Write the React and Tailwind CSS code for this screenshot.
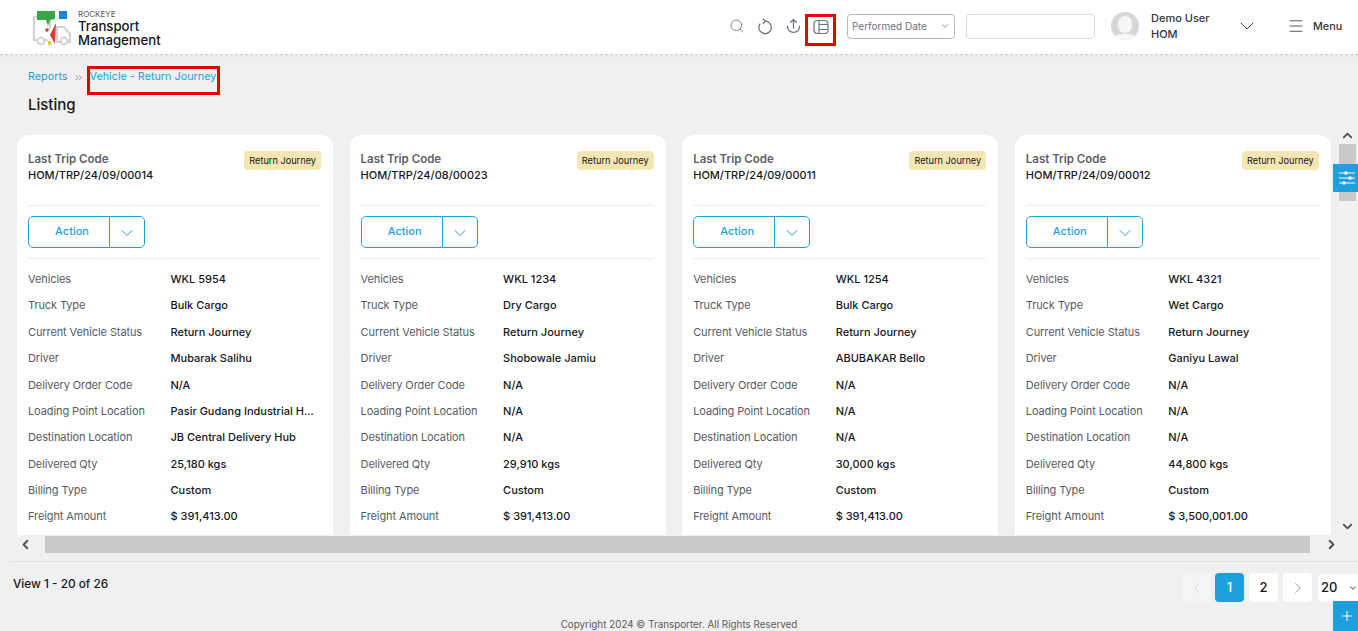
import React from 'react';
import { ChevronDown, ChevronLeft, ChevronRight, ChevronUp, ChevronsRight, Menu, Plus, Search } from 'lucide-react';

const cards = [
    { code: 'HOM/TRP/24/09/00014', vehicle: 'WKL 5954', truck: 'Bulk Cargo', driver: 'Mubarak Salihu', loading: 'Pasir Gudang Industrial H...', dest: 'JB Central Delivery Hub', qty: '25,180 kgs', amount: '$ 391,413.00' },
    { code: 'HOM/TRP/24/08/00023', vehicle: 'WKL 1234', truck: 'Dry Cargo', driver: 'Shobowale Jamiu', loading: 'N/A', dest: 'N/A', qty: '29,910 kgs', amount: '$ 391,413.00' },
    { code: 'HOM/TRP/24/09/00011', vehicle: 'WKL 1254', truck: 'Bulk Cargo', driver: 'ABUBAKAR Bello', loading: 'N/A', dest: 'N/A', qty: '30,000 kgs', amount: '$ 391,413.00' },
    { code: 'HOM/TRP/24/09/00012', vehicle: 'WKL 4321', truck: 'Wet Cargo', driver: 'Ganiyu Lawal', loading: 'N/A', dest: 'N/A', qty: '44,800 kgs', amount: '$ 3,500,001.00' },
];

const Logo = () => (
    <svg width="40" height="36" viewBox="0 0 40 36" fill="none">
        <path d="M2 7h16v23H2z" stroke="#d2d2d2" strokeWidth="2.2" />
        <path d="M25 17h7l6 7v8H25z" stroke="#d2d2d2" strokeWidth="2.2" />
        <circle cx="9" cy="31" r="3.4" fill="#fff" stroke="#d2d2d2" strokeWidth="2" />
        <circle cx="32" cy="31" r="3.4" fill="#fff" stroke="#d2d2d2" strokeWidth="2" />
        <path d="M5 1h18v8l-5 1-2 6-2-6H5z" fill="#3aa648" />
        <rect x="27" y="1" width="8" height="8" fill="#1a84d6" />
        <path d="M20 15l-6 12 5 9h5l-1-9 1-14z" fill="#fff" />
        <path d="M24 13l-6 12 5 9z" fill="#d83a2e" />
        <circle cx="15" cy="20" r="1.8" fill="#d83a2e" />
        <path d="M16 31h2.5l1 4H16z" fill="#f2c230" />
    </svg>
);

const RefreshIcon = () => (
    <svg width="16" height="17" viewBox="0 0 16 17" fill="none" stroke="#6b7280" strokeWidth="1.3" strokeLinecap="round">
        <path d="M8 3.2a6.2 6.2 0 1 1-5.2 2.9" />
        <path d="M6.2 1l2.2 2.2-2.2 2.2" />
    </svg>
);

const UploadIcon = () => (
    <svg width="15" height="16" viewBox="0 0 15 16" fill="none" stroke="#6b7280" strokeWidth="1.3" strokeLinecap="round" strokeLinejoin="round">
        <path d="M7.5 10V1.5M4.6 4.2l2.9-2.7 2.9 2.7" />
        <path d="M1.5 8.5c0 3.5 2.6 5.8 6 5.8s6-2.3 6-5.8" />
    </svg>
);

const LayoutIcon = () => (
    <svg width="16" height="16" viewBox="0 0 16 16" fill="none" stroke="#6b7280" strokeWidth="1.2">
        <rect x="1" y="1.5" width="14" height="13" rx="3.5" />
        <path d="M6 1.5v13M6 5.5h9M6 10.5h9" />
    </svg>
);

const FilterIcon = () => (
    <svg width="16" height="14" viewBox="0 0 16 14" fill="#fff" stroke="#fff" strokeWidth="1.2">
        <path d="M0 2h16M0 7h16M0 12h16" />
        <circle cx="7" cy="2" r="1.2" />
        <circle cx="11" cy="7" r="1.2" />
        <circle cx="5" cy="12" r="1.2" />
    </svg>
);

const Row = ({ label, value }) => (
    <div className="flex h-[26.4px] items-center">
        <div className="w-[142.5px] text-[11px] tracking-[-0.1px] text-[#555b66]">{label}</div>
        <div className="whitespace-nowrap text-[11px] font-[450] text-[#14171c]">{value}</div>
    </div>
);

const Card = ({ card }) => (
    <div className="w-[316px] shrink-0 rounded-t-xl bg-white pr-[12px] pl-[11px]">
        <div className="flex h-[71px] items-start justify-between border-b border-[#ececec] pt-[16px]">
            <div>
                <div className="text-[11.5px] leading-4 font-semibold text-[#5b6068]">Last Trip Code</div>
                <div className="text-[11px] leading-4 font-[450] text-[#14171c]">{card.code}</div>
            </div>
            <div className="rounded-[4px] bg-[#f3e6b3] px-[5px] py-[3px] text-[9.2px] leading-[13px] text-[#14171c]">Return Journey</div>
        </div>
        <div className="flex h-[53px] items-center border-b border-[#ececec]">
            <div className="flex h-8 w-[117px] rounded-[5px] border border-[#1f9fdc] text-[#1f9fdc]">
                <div className="flex w-[81px] items-center justify-center border-r border-[#1f9fdc] pb-[2px] pl-[6px] text-[11px] font-medium">Action</div>
                <div className="flex flex-1 items-center justify-center pt-[2px]"><ChevronDown size={20} strokeWidth={1.2} /></div>
            </div>
        </div>
        <div className="pt-[7px]">
            <Row label="Vehicles" value={card.vehicle} />
            <Row label="Truck Type" value={card.truck} />
            <Row label="Current Vehicle Status" value="Return Journey" />
            <Row label="Driver" value={card.driver} />
            <Row label="Delivery Order Code" value="N/A" />
            <Row label="Loading Point Location" value={card.loading} />
            <Row label="Destination Location" value={card.dest} />
            <Row label="Delivered Qty" value={card.qty} />
            <Row label="Billing Type" value="Custom" />
            <Row label="Freight Amount" value={card.amount} />
        </div>
    </div>
);

const PageBtn = ({ children, className }) => (
    <div className={`flex h-[29px] w-[29px] items-center justify-center rounded-[4px] text-[13px] font-medium ${className}`}>{children}</div>
);

const App = () => {
    return (
        <div className="relative flex h-[631px] flex-col overflow-hidden bg-[#f0f0f0] font-['Inter',sans-serif]">
            {/* Header */}
            <div className="relative flex h-[55px] shrink-0 items-center border-b border-dashed border-[#c8c8c8] bg-white pr-[14px] pb-[2px] pl-[32px] shadow-[0_3px_6px_rgba(0,0,0,0.03)]">
                <div className="mt-[4px]"><Logo /></div>
                <div className="mt-[4px] ml-[6px] text-[#14171c]">
                    <div className="text-[8px] leading-[9px] text-[#555]">ROCKEYE</div>
                    <div className="text-[13.2px] leading-[14px] font-medium">Transport</div>
                    <div className="text-[13.2px] leading-[14px] font-medium">Management</div>
                </div>
                <div className="ml-auto flex items-center text-[#6b7280]">
                    <Search size={16} strokeWidth={1.3} />
                    <div className="ml-[12px]"><RefreshIcon /></div>
                    <div className="ml-[13px]"><UploadIcon /></div>
                    <div className="mt-[8px] ml-[4px] flex h-[32px] w-[31px] items-center justify-center border-[3px] border-[#e60000] pb-[6px]"><LayoutIcon /></div>
                </div>
                <div className="ml-[11px] flex h-[25px] w-[108px] items-center justify-between rounded-[4px] border border-[#b4bac4] px-[4px] text-[10px] text-[#6b7280]">
                    Performed Date
                    <ChevronDown size={10} strokeWidth={2} />
                </div>
                <div className="ml-[11px] h-[25px] w-[129px] rounded-[4px] border border-[#d5d9e0] bg-white" />
                <div className="relative ml-[16px] h-[28px] w-[28px] overflow-hidden rounded-full bg-[#d6d6d6]">
                    <div className="mx-auto mt-[4px] h-[17px] w-[14px] rounded-full bg-[#f6f6f6]" />
                    <div className="absolute -bottom-[6px] left-[3px] h-[12px] w-[22px] rounded-full bg-[#f6f6f6]" />
                </div>
                <div className="ml-[12px] w-[84px] text-[11px] leading-[16px] font-[450] text-[#33363b]">
                    <div>Demo User</div>
                    <div>HOM</div>
                </div>
                <ChevronDown size={24} strokeWidth={0.9} className="text-[#33363b]" />
                <Menu size={18} strokeWidth={1.1} className="ml-[28px] text-[#33363b]" />
                <div className="mt-[2px] ml-[8px] w-[31px] text-[10.8px] font-[450] text-[#33363b]">Menu</div>
            </div>

            {/* Breadcrumb */}
            <div className="flex h-[38px] shrink-0 items-center pt-[12px] pl-[28px] text-[10.8px] text-[#1f9fdc]">
                <span className="pb-[5px]">Reports</span>
                <div className="mr-[3px] ml-[5px] pb-[5px]"><ChevronsRight size={11} className="text-[#8a8a8a]" /></div>
                <div className="flex h-[29px] items-center border-[3px] border-[#e60000] pr-[1px] pb-[5px]">Vehicle - Return Journey</div>
            </div>
            <div className="h-[42px] shrink-0 pt-[2px] pl-[28px] text-[15px] leading-5 font-medium text-[#14171c]">Listing</div>

            {/* Cards */}
            <div className="flex h-[401px] shrink-0 pl-[17px]">
                <div className="flex h-[400px] w-[1322px] shrink-0 gap-[16.6px] overflow-hidden">
                    {cards.map(card => <Card key={card.code} card={card} />)}
                </div>
                <div className="-mt-[8px] flex h-[408px] w-[17px] flex-col items-center bg-[#f1f1f1]">
                    <ChevronUp size={15} strokeWidth={3} className="h-[17px] text-[#505050]" />
                    <div className="h-[57px] w-full bg-[#c9c9c9]" />
                    <ChevronDown size={15} strokeWidth={3} className="mt-auto h-[17px] text-[#505050]" />
                </div>
            </div>
            <div className="ml-[17px] flex h-[17px] w-[1322px] shrink-0 items-center">
                <div className="flex h-full w-[28px] items-center pl-[1px]"><ChevronLeft size={15} strokeWidth={3} className="text-[#505050]" /></div>
                <div className="h-full w-[1265px] bg-[#c9c9c9]" />
                <div className="flex h-full flex-1 items-center justify-end"><ChevronRight size={15} strokeWidth={3} className="text-[#505050]" /></div>
            </div>

            {/* Pagination */}
            <div className="mt-[8px] ml-[9px] flex h-[62px] shrink-0 items-start border-t border-[#dfe0ea] pt-[11px]">
                <div className="ml-[4px] text-[11.8px] leading-[22px] font-medium text-[#14171c]">View 1 - 20 of 26</div>
                <div className="ml-auto flex items-center">
                    <PageBtn className="bg-[#f4f4f4] text-[#c4c8cf]"><ChevronLeft size={18} strokeWidth={1} /></PageBtn>
                    <PageBtn className="ml-[4px] bg-[#1f9fdc] text-white">1</PageBtn>
                    <PageBtn className="ml-[5px] bg-white text-[#14171c]">2</PageBtn>
                    <PageBtn className="ml-[5px] bg-white text-[#6b7280]"><ChevronRight size={18} strokeWidth={1} /></PageBtn>
                    <div className="ml-[6px] flex h-[28px] w-[40px] items-center justify-between rounded-l-[4px] bg-white pl-[3px] text-[13px] font-medium text-[#14171c]">
                        20
                        <ChevronDown size={10} strokeWidth={2} />
                    </div>
                </div>
            </div>

            <div className="-mt-[6px] text-center text-[9.85px] leading-[14px] text-[#5f5a55]">Copyright 2024 © Transporter. All Rights Reserved</div>

            {/* Floating buttons */}
            <div className="absolute top-[164px] right-0 flex h-[28px] w-[25px] items-center justify-center bg-[#1f9fdc] pl-[2px]"><FilterIcon /></div>
            <div className="absolute right-0 bottom-0 flex h-[30px] w-[25px] items-center justify-center bg-[#1f9fdc] pl-[2px] text-white"><Plus size={16} strokeWidth={1.5} /></div>
        </div>
    );
};

export default App;
